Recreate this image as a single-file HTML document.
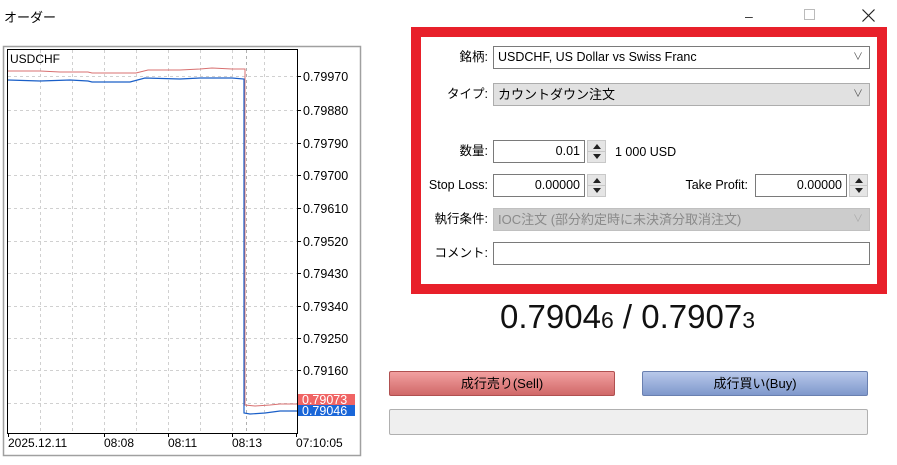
<!DOCTYPE html>
<html><head><meta charset="utf-8"><style>
*{margin:0;padding:0;box-sizing:border-box}
body{width:897px;height:465px;background:#fff;position:relative;overflow:hidden;font-family:"Liberation Sans","Noto Sans CJK JP",sans-serif;font-size:12px;color:#000}
.a{position:absolute}
.lbl{position:absolute;text-align:right;font-size:12.5px;line-height:23px}
.box{position:absolute;border:1px solid #7a7a7a;background:#fff;height:23px;line-height:21px;padding:0 4px;font-size:12.5px}
.sel .ch{position:absolute;right:6px;top:0;color:#555;font-size:10px}
.num{text-align:right}
.spin{position:absolute;width:19px;height:23px;background:#e5e5e5;border:1px solid #c8c8c8}
.spin i{position:absolute;left:5px;width:0;height:0;border-left:4px solid transparent;border-right:4px solid transparent}
.spin .u{top:3px;border-bottom:5px solid #222}
.spin .d{bottom:3px;border-top:5px solid #222}
.spin b{position:absolute;left:0;right:0;top:10px;border-top:1px solid #c8c8c8}
.btn{position:absolute;height:25px;line-height:24px;text-align:center;font-size:13px;border:1px solid #888;border-radius:2px}
</style></head><body>
<div class="a" style="left:4px;top:7px;font-size:13px">オーダー</div>
<div class="a" style="left:745px;top:8px;font-size:14px;color:#333">&#8211;</div>
<div class="a" style="left:804px;top:9px;width:11px;height:11px;border:1px solid #bbb"></div>
<svg class="a" style="left:862px;top:9px" width="13" height="13"><path d="M0.5 0.5L12.5 12.5M12.5 0.5L0.5 12.5" stroke="#222" stroke-width="1.2"/></svg>

<svg class="a" style="left:0;top:0" width="380" height="465" xmlns="http://www.w3.org/2000/svg" font-family="Liberation Sans, sans-serif" font-size="12">
<rect x="3.5" y="46.5" width="357" height="409" fill="#fff" stroke="#a0a0a0" stroke-width="1.5"/>
<g stroke="#d0d0d0" stroke-dasharray="3,3" stroke-width="1">
<line x1="8" x2="297" y1="76.5" y2="76.5"/><line x1="8" x2="297" y1="110.5" y2="110.5"/><line x1="8" x2="297" y1="143.5" y2="143.5"/><line x1="8" x2="297" y1="175.5" y2="175.5"/><line x1="8" x2="297" y1="208.5" y2="208.5"/><line x1="8" x2="297" y1="241.5" y2="241.5"/><line x1="8" x2="297" y1="273.5" y2="273.5"/><line x1="8" x2="297" y1="306.5" y2="306.5"/><line x1="8" x2="297" y1="338.5" y2="338.5"/><line x1="8" x2="297" y1="370.5" y2="370.5"/><line x1="8" x2="297" y1="403.5" y2="403.5"/>
<line y1="50" y2="433" x1="40.5" x2="40.5"/><line y1="50" y2="433" x1="72.5" x2="72.5"/><line y1="50" y2="433" x1="104.5" x2="104.5"/><line y1="50" y2="433" x1="136.5" x2="136.5"/><line y1="50" y2="433" x1="168.5" x2="168.5"/><line y1="50" y2="433" x1="200.5" x2="200.5"/><line y1="50" y2="433" x1="232.5" x2="232.5"/><line y1="50" y2="433" x1="264.5" x2="264.5"/>
<line y1="50" y2="433" x1="246.5" x2="246.5" stroke="#b0b0b0"/>
</g>
<polyline fill="none" stroke="#d87070" stroke-width="1" points="8,71 40,71 60,72 88,72 92,73 120,73 136,73 148,70 180,70 200,69 212,68 232,69 245,69 245,405 255,406 270,405 280,404 297,404"/>
<polyline fill="none" stroke="#1a5fc8" stroke-width="1.2" points="8,80 40,81 70,80 88,81 92,82 112,82 130,82 145,78 180,79 200,78 220,78 232,78 244,79 244,413 250,414 265,413 280,411 297,411"/>
<rect x="7.5" y="49.5" width="290" height="384" fill="none" stroke="#000"/>
<text x="10" y="63">USDCHF</text>
<g font-size="12.5">
<text x="303" y="81">0.79970</text><text x="303" y="115">0.79880</text><text x="303" y="148">0.79790</text><text x="303" y="180">0.79700</text><text x="303" y="213">0.79610</text><text x="303" y="246">0.79520</text><text x="303" y="278">0.79430</text><text x="303" y="311">0.79340</text><text x="303" y="343">0.79250</text><text x="303" y="375">0.79160</text>
</g>
<g stroke="#000"><line x1="297" x2="301" y1="76.5" y2="76.5"/><line x1="297" x2="301" y1="110.5" y2="110.5"/><line x1="297" x2="301" y1="143.5" y2="143.5"/><line x1="297" x2="301" y1="175.5" y2="175.5"/><line x1="297" x2="301" y1="208.5" y2="208.5"/><line x1="297" x2="301" y1="241.5" y2="241.5"/><line x1="297" x2="301" y1="273.5" y2="273.5"/><line x1="297" x2="301" y1="306.5" y2="306.5"/><line x1="297" x2="301" y1="338.5" y2="338.5"/><line x1="297" x2="301" y1="370.5" y2="370.5"/>
<line x1="104.5" x2="104.5" y1="433" y2="437"/><line x1="168.5" x2="168.5" y1="433" y2="437"/><line x1="232.5" x2="232.5" y1="433" y2="437"/><line x1="296.5" x2="296.5" y1="433" y2="437"/><line x1="8.5" x2="8.5" y1="433" y2="437"/></g>
<rect x="298" y="394" width="57" height="11" fill="#f06464"/>
<rect x="298" y="405" width="57" height="11" fill="#1a66d8"/>
<text x="302" y="404" fill="#fff" font-size="12.5">0.79073</text>
<text x="302" y="415" fill="#fff" font-size="12.5">0.79046</text>
<text x="8" y="447">2025.12.11</text><text x="104" y="447">08:08</text><text x="168" y="447">08:11</text><text x="232" y="447">08:13</text><text x="296" y="447">07:10:05</text>
</svg>

<div class="a" style="left:411px;top:27px;width:476px;height:267px;border:10px solid #e8202a"></div>

<div class="lbl" style="left:420px;top:46px;width:68px">銘柄:</div>
<div class="box sel" style="left:493px;top:46px;width:377px">USDCHF, US Dollar vs Swiss Franc<span class="ch">&#8744;</span></div>
<div class="lbl" style="left:420px;top:83px;width:68px">タイプ:</div>
<div class="box sel" style="left:493px;top:83px;width:377px;background:#e1e1e1;border-color:#adadad;font-size:13px">カウントダウン注文<span class="ch">&#8744;</span></div>

<div class="lbl" style="left:420px;top:140px;width:68px">数量:</div>
<div class="box num" style="left:493px;top:140px;width:92px">0.01</div>
<div class="spin" style="left:587px;top:140px"><i class="u"></i><b></b><i class="d"></i></div>
<div class="a" style="left:615px;top:145px;font-size:12.5px">1 000 USD</div>

<div class="lbl" style="left:405px;top:174px;width:83px">Stop Loss:</div>
<div class="box num" style="left:493px;top:174px;width:92px">0.00000</div>
<div class="spin" style="left:587px;top:174px"><i class="u"></i><b></b><i class="d"></i></div>
<div class="lbl" style="left:655px;top:174px;width:93px">Take Profit:</div>
<div class="box num" style="left:755px;top:174px;width:92px">0.00000</div>
<div class="spin" style="left:849px;top:174px"><i class="u"></i><b></b><i class="d"></i></div>

<div class="lbl" style="left:415px;top:208px;width:73px">執行条件:</div>
<div class="box sel" style="left:493px;top:208px;width:377px;background:#cccccc;border-color:#c0c0c0;color:#8a8a8a;font-size:13px">IOC注文 (部分約定時に未決済分取消注文)<span class="ch" style="color:#aaa">&#8744;</span></div>
<div class="lbl" style="left:420px;top:242px;width:68px">コメント:</div>
<div class="box" style="left:493px;top:242px;width:377px"></div>

<div class="a" style="left:480px;top:298px;width:295px;text-align:center;font-size:33px;color:#111">0.7904<span style="font-size:23px">6</span> / 0.7907<span style="font-size:23px">3</span></div>

<div class="btn" style="left:389px;top:371px;width:226px;background:linear-gradient(#f2a0a0,#d06868);border-color:#b05050">成行売り(Sell)</div>
<div class="btn" style="left:642px;top:371px;width:226px;background:linear-gradient(#b8c8ea,#7f98cc);border-color:#6a80b0">成行買い(Buy)</div>
<div class="a" style="left:389px;top:409px;width:479px;height:26px;background:#efefef;border:1px solid #b0b0b0;border-radius:2px"></div>
</body></html>
